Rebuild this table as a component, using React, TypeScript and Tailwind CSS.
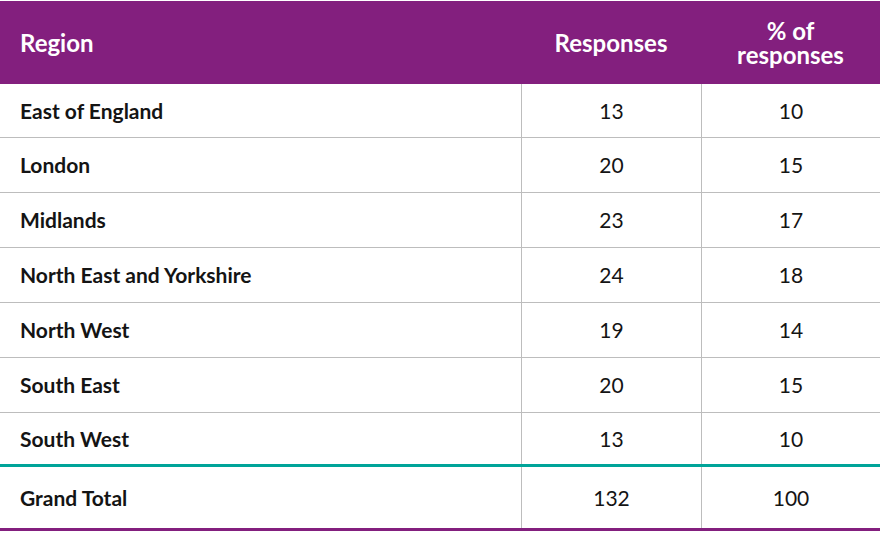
import React from "react";

const rows = [
  { region: "East of England", responses: 13, pct: 10, h: "h-[54px]" },
  { region: "London", responses: 20, pct: 15, h: "h-[55px]" },
  { region: "Midlands", responses: 23, pct: 17, h: "h-[55px]" },
  { region: "North East and Yorkshire", responses: 24, pct: 18, h: "h-[55px]" },
  { region: "North West", responses: 19, pct: 14, h: "h-[55px]" },
  { region: "South East", responses: 20, pct: 15, h: "h-[55px]" },
];

const App: React.FC = () => {
  return (
    <div className="w-[882px] h-[550px] bg-white pt-px font-['Lato',sans-serif] text-[#141414]">
      <div className="w-[880px]">
        {/* header */}
        <div className="grid grid-cols-[521px_180px_179px] h-[83px] bg-[#831f7e] text-white font-bold text-[24px]">
          <div className="flex items-center pl-5">Region</div>
          <div className="flex items-center justify-center">Responses</div>
          <div className="flex flex-col items-center justify-center text-center leading-[24px] pt-px">
            <span>% of</span>
            <span>responses</span>
          </div>
        </div>

        {rows.map((r) => (
          <div
            key={r.region}
            className={`grid grid-cols-[521px_180px_179px] ${r.h} border-b border-[#bdbdbd]`}
          >
            <div className="flex items-center pl-5 font-bold text-[21px]">{r.region}</div>
            <div className="flex items-center justify-center border-l border-[#bdbdbd] text-[21px]">
              {r.responses}
            </div>
            <div className="flex items-center justify-center border-l border-[#bdbdbd] text-[21px]">
              {r.pct}
            </div>
          </div>
        ))}

        <div className="grid grid-cols-[521px_180px_179px] h-[54px] border-b-[3px] border-[#00a499]">
          <div className="flex items-center pl-5 font-bold text-[21px]">South West</div>
          <div className="flex items-center justify-center border-l border-[#bdbdbd] text-[21px]">13</div>
          <div className="flex items-center justify-center border-l border-[#bdbdbd] text-[21px]">10</div>
        </div>

        <div className="grid grid-cols-[521px_180px_179px] h-[64px] border-b-[3px] border-[#831f7e]">
          <div className="flex items-center pl-5 font-bold text-[21px]">Grand Total</div>
          <div className="flex items-center justify-center border-l border-[#bdbdbd] text-[21px]">132</div>
          <div className="flex items-center justify-center border-l border-[#bdbdbd] text-[21px]">100</div>
        </div>
      </div>
    </div>
  );
};

export default App;
